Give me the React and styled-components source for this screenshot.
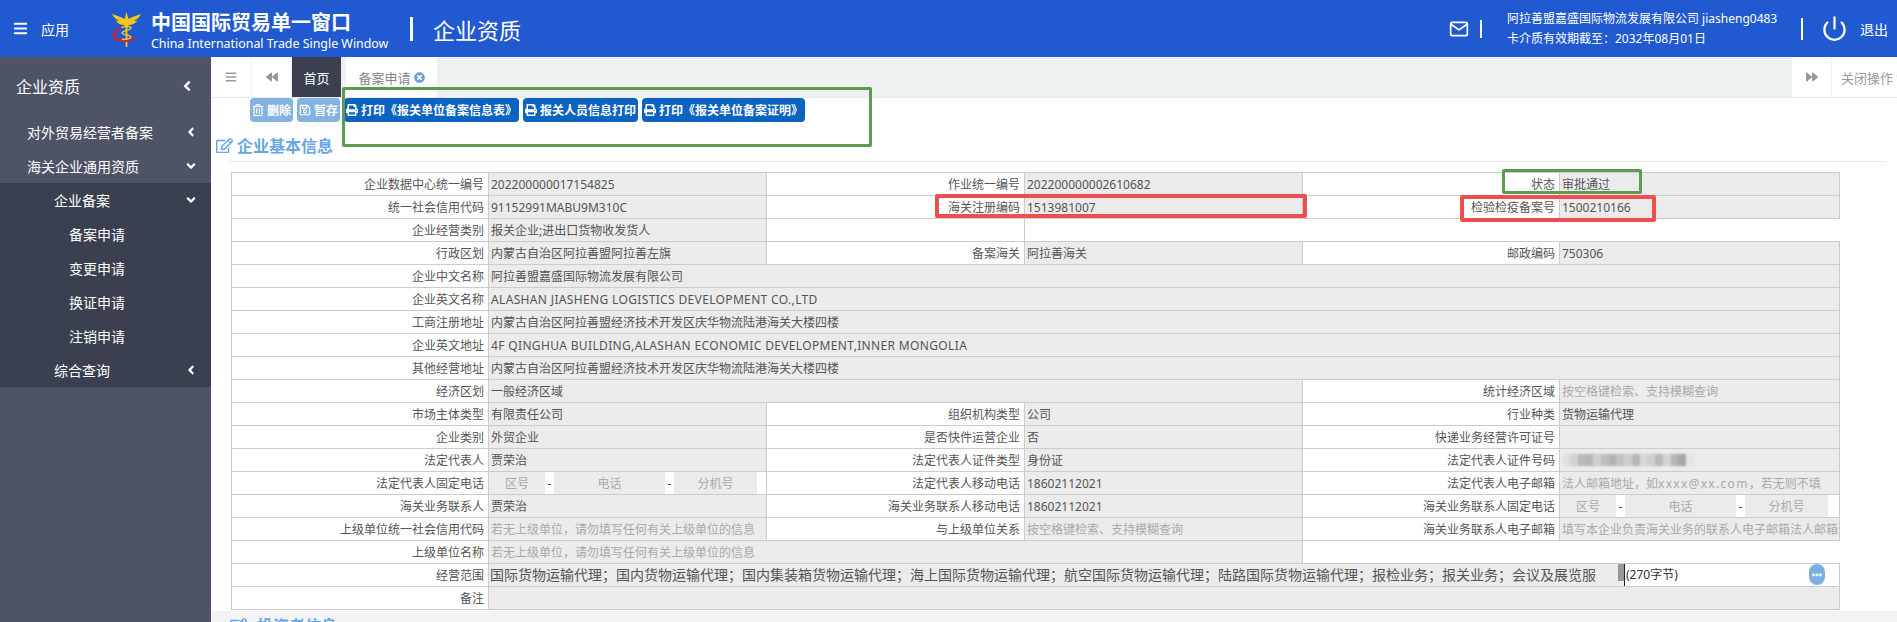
import React from 'react';
import styled, { createGlobalStyle } from 'styled-components';
import {
  FaBars,
  FaBackward,
  FaForward,
  FaTimesCircle,
  FaRegTrashAlt,
  FaRegSave,
  FaPrint,
  FaRegEdit,
  FaAngleLeft,
  FaAngleDown,
  FaCaretDown,
  FaEllipsisH,
} from 'react-icons/fa';
import { FiMail, FiPower } from 'react-icons/fi';

const FONT = `"Noto Sans", "Noto Sans CJK SC", sans-serif`;

const GlobalStyle = createGlobalStyle`
  html, body {
    margin: 0;
    height: 100%;
    overflow: hidden;
    background: #fff;
  }
  body {
    font-family: ${FONT};
    font-size: 12px;
    color: #555;
  }
`;

const Page = styled.div`
  height: 622px;
  display: flex;
  flex-direction: column;
  overflow: hidden;
`;

/* header */
const Header = styled.header`
  height: 57px;
  flex: none;
  background: #215ad0;
  color: #fff;
  display: flex;
  align-items: center;
`;

const AppMenu = styled.div`
  display: flex;
  align-items: center;
  gap: 13px;
  padding-left: 13px;
  width: 99px;
  font-size: 14px;

  svg {
    font-size: 15px;
  }
`;

const LogoBox = styled.svg`
  width: 29px;
  height: 38px;
  margin-right: 10px;
  flex: none;
`;

const Brand = styled.div`
  width: 259px;
  padding-top: 4px;
  flex: none;
`;

const BrandName = styled.div`
  font-size: 20px;
  line-height: 26px;
  font-weight: 700;
`;

const BrandSub = styled.div`
  font-size: 12.4px;
  line-height: 16px;
  white-space: nowrap;
`;

const HeaderBar = styled.span`
  width: ${(p) => p.$w || 2}px;
  height: ${(p) => p.$h || 24}px;
  background: #fff;
  flex: none;
`;

const PageTitle = styled.div`
  font-size: 22px;
  margin-left: 20px;
`;

const HeaderRight = styled.div`
  margin-left: auto;
  display: flex;
  align-items: center;
  padding-right: 9px;
`;

const MailIcon = styled(FiMail)`
  font-size: 20px;
  margin-right: 11px;
`;

const UserInfo = styled.div`
  margin-left: 25px;
  width: 294px;
  font-size: 12px;
  line-height: 20px;
  white-space: nowrap;
`;

const PowerIcon = styled(FiPower)`
  font-size: 27px;
  margin: 0 12px 0 18px;
`;

const Logout = styled.span`
  font-size: 14px;
`;

/* body */
const Body = styled.div`
  flex: 1;
  display: flex;
  min-height: 0;
`;

const Sidebar = styled.nav`
  width: 211px;
  flex: none;
  background: #4e5366;
  color: #fff;
`;

const SideTitle = styled.div`
  height: 58px;
  padding: 0 16px;
  display: flex;
  align-items: center;
  justify-content: space-between;
  font-size: 16px;
`;

const SubMenu = styled.div`
  background: #3b4050;
`;

const SideItem = styled.div`
  height: 34px;
  display: flex;
  align-items: center;
  justify-content: space-between;
  padding: 0 13px 0 ${(p) => p.$indent}px;
  font-size: 14px;
`;

const Main = styled.main`
  flex: 1;
  min-width: 0;
  position: relative;
  display: flex;
  flex-direction: column;
`;

/* tabs */
const TabBar = styled.div`
  height: 40px;
  flex: none;
  display: flex;
  background: #eef1f2;
  border-bottom: 1px solid #e7eaec;
  font-size: 13px;
`;

const TabButton = styled.div`
  width: ${(p) => p.$w}px;
  box-sizing: border-box;
  background: #fff;
  color: #999;
  display: flex;
  align-items: center;
  justify-content: center;
  border-right: 1px solid #eef1f2;
  font-size: 12px;
`;

const TabActive = styled.div`
  width: 49px;
  background: #3a4050;
  color: #fff;
  display: flex;
  align-items: center;
  justify-content: center;
`;

const Tab = styled.div`
  margin-left: 5px;
  width: 91px;
  background: #fff;
  color: #888;
  display: flex;
  align-items: center;
  justify-content: center;
  gap: 3px;

  svg {
    color: #6f9ed6;
    font-size: 11px;
  }
`;

const TabRight = styled.div`
  margin-left: auto;
  display: flex;
`;

const CloseOps = styled.div`
  width: 56px;
  padding-left: 9px;
  background: #fff;
  color: #999;
  display: flex;
  align-items: center;
  gap: 1px;
  white-space: nowrap;
  overflow: hidden;

  svg {
    flex: none;
    font-size: 12px;
  }
`;

/* toolbar */
const Toolbar = styled.div`
  height: 24px;
  flex: none;
  display: flex;
  gap: 4px;
  padding-left: 39px;
`;

const ToolButton = styled.button`
  height: 24px;
  margin: 0;
  padding: 0 2px;
  border: 0;
  border-radius: 4px;
  font-family: ${FONT};
  font-size: 12px;
  font-weight: 700;
  color: #fff;
  background: ${(p) => (p.disabled ? '#84b3e2' : '#0c63c2')};
  display: flex;
  align-items: center;
  gap: 3px;
  white-space: nowrap;

  svg {
    font-size: 12px;
  }
`;

const SectionTitle = styled.h2`
  margin: 11px 0 0 5px;
  height: 24px;
  display: flex;
  align-items: center;
  gap: 4px;
  font-size: 16px;
  font-weight: 700;
  color: #68a5e6;
  flex: none;

  svg {
    font-size: 17px;
  }
`;

const Rule = styled.div`
  flex: none;
  height: 1px;
  margin: 4px 11px 10px 19px;
  background: #e8e8e8;
`;

/* form table */
const FormTable = styled.table`
  flex: none;
  margin-left: 20px;
  width: 1608px;
  table-layout: fixed;
  border-collapse: collapse;
`;

const Row = styled.tr`
  height: 23px;
`;

const LabelCell = styled.td`
  padding: 0 4px 0 0;
  border: 1px solid #ccc;
  background: #fff;
  color: #555;
  text-align: right;
  white-space: nowrap;
  overflow: hidden;
`;

const ValueCell = styled.td`
  padding: 0 0 0 2px;
  border: 1px solid #ccc;
  background: #ebebeb;
  color: ${(p) => (p.$hint ? '#aaa' : '#555')};
  white-space: nowrap;
  overflow: hidden;
`;

const Spaced = styled.span`
  letter-spacing: ${(p) => p.$gap}px;
`;

const BlankCell = styled.td`
  padding: 0;
  border: 1px solid #ccc;
  border-right: ${(p) => (p.$open ? '0' : '1px solid #ccc')};
  background: #fff;
`;

const PhoneCell = styled.td`
  padding: 0;
  border: 1px solid #ccc;
  background: #fff;
`;

const PhoneRow = styled.div`
  display: flex;
  height: 22px;
  width: 268px;
`;

const PhoneField = styled.div`
  width: ${(p) => p.$w}px;
  background: #ebebeb;
  color: #aaa;
  display: flex;
  align-items: center;
  justify-content: center;
`;

const PhoneDash = styled.span`
  width: 9px;
  color: #333;
  display: flex;
  align-items: center;
  justify-content: center;
`;

const MaskedId = styled.div`
  display: flex;
  height: 12px;
  width: 132px;
  filter: blur(1.2px);
`;

const MaskBlock = styled.span`
  flex: 1;
  background: #8a8a8a;
  opacity: ${(p) => p.$o};
`;

const ScopeCell = styled.td`
  padding: 0;
  border: 1px solid #ccc;
  background: #fff;
`;

const ScopeRow = styled.div`
  display: flex;
  align-items: stretch;
  height: 22px;
`;

const ScopeText = styled.div`
  width: 1129px;
  padding-left: 1px;
  box-sizing: border-box;
  background: #ebebeb;
  color: #555;
  font-size: 14px;
  line-height: 22px;
  white-space: nowrap;
  overflow: hidden;
`;

const ScopeScroll = styled.div`
  width: 6px;
  background: linear-gradient(#999 0 17px, #eee 17px);
`;

const ScopeCount = styled.div`
  flex: 1;
  border-left: 1px solid #222;
  padding-left: 1px;
  color: #333;
  line-height: 22px;
`;

const MoreButton = styled.div`
  width: 16px;
  height: 21px;
  margin: 0 14px 0 0;
  border-radius: 8px;
  background: #7cb0e4;
  color: #fff;
  font-size: 10px;
  display: flex;
  align-items: center;
  justify-content: center;
`;

/* next section, cut off by the window */
const NextPanel = styled.div`
  flex: 1;
  margin-top: 1px;
  background: #f3f3f3;
  overflow: hidden;
`;

const NextTitle = styled(SectionTitle)`
  margin: 2px 0 0 19px;
  gap: 10px;
`;

/* hand-drawn marks lying over the page */
const Mark = styled.div`
  position: absolute;
  box-sizing: border-box;
  left: ${(p) => p.$x - 211}px;
  top: ${(p) => p.$y - 57}px;
  width: ${(p) => p.$w}px;
  height: ${(p) => p.$h}px;
  border: ${(p) => (p.$red ? '4px solid #ee4e50' : '3px solid #5f9a52')};
  border-radius: 2px;
  pointer-events: none;
`;

const Logo = () => (
  <LogoBox viewBox="0 0 29 38">
    <path
      d="M14.5 2 12.5 9C10 7 5 6 0 4c1 3 4 5 7 7-1 0-3 0-4-1 2 3 6 5 9 5l1 1h3l1-1c3 0 7-2 9-5-1 1-3 1-4 1 3-2 6-4 7-7-5 2-10 3-12.500 5Z"
      fill="#f5c518"
    />
    <path d="M13.600 13h1.800v24h-1.800z" fill="#f5c518" />
    <path
      d="M10 18c0-2 9-2 9 0s-9 3-9 5 9 2 9 4-7 3-9 2M19 18c0 2-9 3-9 5s9 2 9 4"
      fill="none"
      stroke="#f5c518"
      strokeWidth="1.400"
    />
    <path
      d="M11 15C5 17 0 22 1 27c1 4 8 6 13 5 5 0 11-3 13-8-3 4-8 6-13 6-5 1-10-1-10-4-1-4 3-8 7-11Z"
      fill="#d81e28"
    />
    <circle cx="14.500" cy="8" r="1.600" fill="#f5c518" />
  </LogoBox>
);

const MASK = [0.1, 0.25, 0.5, 0.55, 0.3, 0.45, 0.6, 0.4, 0.3, 0.55, 0.2, 0.3, 0.5, 0.25, 0.55, 0.7, 0.05];

const HINT_SEARCH = '按空格键检索、支持模糊查询';
const HINT_PARENT = '若无上级单位，请勿填写任何有关上级单位的信息';
const ADDRESS = '内蒙古自治区阿拉善盟经济技术开发区庆华物流陆港海关大楼四楼';
const SCOPE =
  '国际货物运输代理；国内货物运输代理；国内集装箱货物运输代理；海上国际货物运输代理；航空国际货物运输代理；陆路国际货物运输代理；报检业务；报关业务；会议及展览服';

const Phone = () => (
  <PhoneCell>
    <PhoneRow>
      <PhoneField $w={56}>区号</PhoneField>
      <PhoneDash>-</PhoneDash>
      <PhoneField $w={111}>电话</PhoneField>
      <PhoneDash>-</PhoneDash>
      <PhoneField $w={83}>分机号</PhoneField>
    </PhoneRow>
  </PhoneCell>
);

const Pair = ({ label, children, hint, span }) => (
  <>
    <LabelCell>{label}</LabelCell>
    <ValueCell $hint={hint} colSpan={span}>
      {children}
    </ValueCell>
  </>
);

const SIDE_SUB = ['备案申请', '变更申请', '换证申请', '注销申请'];

export default function App() {
  return (
    <Page>
      <GlobalStyle />
      <Header>
        <AppMenu>
          <FaBars />
          <span>应用</span>
        </AppMenu>
        <Logo />
        <Brand>
          <BrandName>中国国际贸易单一窗口</BrandName>
          <BrandSub>China International Trade Single Window</BrandSub>
        </Brand>
        <HeaderBar $w={3} />
        <PageTitle>企业资质</PageTitle>
        <HeaderRight>
          <MailIcon />
          <HeaderBar $h={18} />
          <UserInfo>
            <div>阿拉善盟嘉盛国际物流发展有限公司 jiasheng0483</div>
            <div>卡介质有效期截至：2032年08月01日</div>
          </UserInfo>
          <HeaderBar $h={22} />
          <PowerIcon />
          <Logout>退出</Logout>
        </HeaderRight>
      </Header>
      <Body>
        <Sidebar>
          <SideTitle>
            企业资质
            <FaAngleLeft />
          </SideTitle>
          <SideItem $indent={27}>
            对外贸易经营者备案
            <FaAngleLeft />
          </SideItem>
          <SideItem $indent={27}>
            海关企业通用资质
            <FaAngleDown />
          </SideItem>
          <SubMenu>
            <SideItem $indent={54}>
              企业备案
              <FaAngleDown />
            </SideItem>
            {SIDE_SUB.map((name) => (
              <SideItem key={name} $indent={69}>
                {name}
              </SideItem>
            ))}
            <SideItem $indent={54}>
              综合查询
              <FaAngleLeft />
            </SideItem>
          </SubMenu>
        </Sidebar>
        <Main>
          <TabBar>
            <TabButton $w={41}>
              <FaBars />
            </TabButton>
            <TabButton $w={40}>
              <FaBackward />
            </TabButton>
            <TabActive>首页</TabActive>
            <Tab>
              备案申请
              <FaTimesCircle />
            </Tab>
            <TabRight>
              <TabButton $w={40}>
                <FaForward />
              </TabButton>
              <CloseOps>
                关闭操作
                <FaCaretDown />
              </CloseOps>
            </TabRight>
          </TabBar>
          <Toolbar>
            <ToolButton disabled>
              <FaRegTrashAlt />
              删除
            </ToolButton>
            <ToolButton disabled>
              <FaRegSave />
              暂存
            </ToolButton>
            <ToolButton>
              <FaPrint />
              打印《报关单位备案信息表》
            </ToolButton>
            <ToolButton>
              <FaPrint />
              报关人员信息打印
            </ToolButton>
            <ToolButton>
              <FaPrint />
              打印《报关单位备案证明》
            </ToolButton>
          </Toolbar>
          <SectionTitle>
            <FaRegEdit />
            企业基本信息
          </SectionTitle>
          <Rule />
          <FormTable>
            <colgroup>
              <col width="257" />
              <col width="278" />
              <col width="258" />
              <col width="278" />
              <col width="257" />
              <col width="280" />
            </colgroup>
            <tbody>
              <Row>
                <Pair label="企业数据中心统一编号">202200000017154825</Pair>
                <Pair label="作业统一编号">202200000002610682</Pair>
                <Pair label="状态">审批通过</Pair>
              </Row>
              <Row>
                <Pair label="统一社会信用代码">91152991MABU9M310C</Pair>
                <Pair label="海关注册编码">1513981007</Pair>
                <Pair label="检验检疫备案号">1500210166</Pair>
              </Row>
              <Row>
                <Pair label="企业经营类别">报关企业;进出口货物收发货人</Pair>
                <BlankCell />
                <BlankCell colSpan={3} $open />
              </Row>
              <Row>
                <Pair label="行政区划">内蒙古自治区阿拉善盟阿拉善左旗</Pair>
                <Pair label="备案海关">阿拉善海关</Pair>
                <Pair label="邮政编码">750306</Pair>
              </Row>
              <Row>
                <Pair label="企业中文名称" span={5}>
                  阿拉善盟嘉盛国际物流发展有限公司
                </Pair>
              </Row>
              <Row>
                <Pair label="企业英文名称" span={5}>
                  <Spaced $gap={0.35}>ALASHAN JIASHENG LOGISTICS DEVELOPMENT CO.,LTD</Spaced>
                </Pair>
              </Row>
              <Row>
                <Pair label="工商注册地址" span={5}>
                  {ADDRESS}
                </Pair>
              </Row>
              <Row>
                <Pair label="企业英文地址" span={5}>
                  <Spaced $gap={0.35}>4F QINGHUA BUILDING,ALASHAN ECONOMIC DEVELOPMENT,INNER MONGOLIA</Spaced>
                </Pair>
              </Row>
              <Row>
                <Pair label="其他经营地址" span={5}>
                  {ADDRESS}
                </Pair>
              </Row>
              <Row>
                <Pair label="经济区划" span={3}>
                  一般经济区域
                </Pair>
                <Pair label="统计经济区域" hint>
                  {HINT_SEARCH}
                </Pair>
              </Row>
              <Row>
                <Pair label="市场主体类型">有限责任公司</Pair>
                <Pair label="组织机构类型">公司</Pair>
                <Pair label="行业种类">货物运输代理</Pair>
              </Row>
              <Row>
                <Pair label="企业类别">外贸企业</Pair>
                <Pair label="是否快件运营企业">否</Pair>
                <Pair label="快递业务经营许可证号" />
              </Row>
              <Row>
                <Pair label="法定代表人">贾荣治</Pair>
                <Pair label="法定代表人证件类型">身份证</Pair>
                <Pair label="法定代表人证件号码">
                  <MaskedId>
                    {MASK.map((o, i) => (
                      <MaskBlock key={i} $o={o} />
                    ))}
                  </MaskedId>
                </Pair>
              </Row>
              <Row>
                <LabelCell>法定代表人固定电话</LabelCell>
                <Phone />
                <Pair label="法定代表人移动电话">18602112021</Pair>
                <Pair label="法定代表人电子邮箱" hint>
                  法人邮箱地址，如<Spaced $gap={1.3}>xxxx@xx.com</Spaced>，若无则不填
                </Pair>
              </Row>
              <Row>
                <Pair label="海关业务联系人">贾荣治</Pair>
                <Pair label="海关业务联系人移动电话">18602112021</Pair>
                <LabelCell>海关业务联系人固定电话</LabelCell>
                <Phone />
              </Row>
              <Row>
                <Pair label="上级单位统一社会信用代码" hint>
                  {HINT_PARENT}
                </Pair>
                <Pair label="与上级单位关系" hint>
                  {HINT_SEARCH}
                </Pair>
                <Pair label="海关业务联系人电子邮箱" hint>
                  填写本企业负责海关业务的联系人电子邮箱法人邮箱:
                </Pair>
              </Row>
              <Row>
                <Pair label="上级单位名称" hint span={3}>
                  {HINT_PARENT}
                </Pair>
                <BlankCell colSpan={2} $open />
              </Row>
              <Row>
                <LabelCell>经营范围</LabelCell>
                <ScopeCell colSpan={5}>
                  <ScopeRow>
                    <ScopeText>{SCOPE}</ScopeText>
                    <ScopeScroll />
                    <ScopeCount>(270字节)</ScopeCount>
                    <MoreButton>
                      <FaEllipsisH />
                    </MoreButton>
                  </ScopeRow>
                </ScopeCell>
              </Row>
              <Row>
                <Pair label="备注" span={5} />
              </Row>
            </tbody>
          </FormTable>
          <NextPanel>
            <NextTitle>
              <FaRegEdit />
              投资者信息
            </NextTitle>
          </NextPanel>
          <Mark $x={342} $y={87} $w={530} $h={60} />
          <Mark $x={1502} $y={169} $w={140} $h={25} />
          <Mark $x={935} $y={194} $w={372} $h={24} $red />
          <Mark $x={1460} $y={195} $w={196} $h={27} $red />
        </Main>
      </Body>
    </Page>
  );
}
